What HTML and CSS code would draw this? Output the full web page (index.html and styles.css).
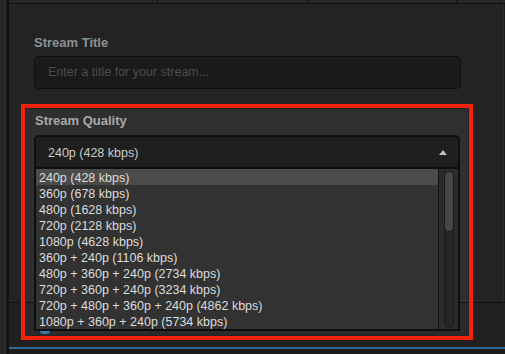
FILE: index.html
```html
<!DOCTYPE html>
<html>
<head>
<meta charset="utf-8">
<link rel="stylesheet" href="styles.css">
</head>
<body>
<div class="app">
  <div class="side"></div>
  <div class="main">
    <div class="topbar"><span></span><span></span><span></span><span></span></div>
    <div class="panel">
      <div class="field-label title-label">Stream Title</div>
      <div class="input">Enter a title for your stream...</div>
      <div class="quality">
        <div class="field-label quality-label">Stream Quality</div>
        <div class="select"><span>240p (428 kbps)</span><span class="caret"></span></div>
        <div class="list">
          <ul class="options">
            <li class="active">240p (428 kbps)</li>
            <li>360p (678 kbps)</li>
            <li>480p (1628 kbps)</li>
            <li>720p (2128 kbps)</li>
            <li>1080p (4628 kbps)</li>
            <li>360p + 240p (1106 kbps)</li>
            <li>480p + 360p + 240p (2734 kbps)</li>
            <li>720p + 360p + 240p (3234 kbps)</li>
            <li>720p + 480p + 360p + 240p (4862 kbps)</li>
            <li>1080p + 360p + 240p (5734 kbps)</li>
          </ul>
          <div class="scroll"><div class="track"><div class="thumb"></div></div></div>
        </div>
        <div class="peek"></div>
      </div>
    </div>
    <div class="lower"></div>
    <div class="blue"></div>
    <div class="bottom"></div>
  </div>
</div>
</body>
</html>
```
FILE: styles.css
```css
* { box-sizing: border-box; }
html, body { margin: 0; padding: 0; }
body {
  width: 505px;
  height: 354px;
  overflow: hidden;
  background: #1d1d1d;
  font-family: "Liberation Sans", Arial, sans-serif;
}
.app { display: flex; height: 354px; }
.side {
  width: 9px;
  flex: none;
  background: linear-gradient(to right, #2a2a2a 0 2px, #1f1f1f 2px 3px, #2c2c2c 3px 6px, #131313 6px 9px);
}
.main { flex: 1; display: flex; flex-direction: column; min-width: 0; }
.topbar {
  height: 4px;
  flex: none;
  display: grid;
  grid-template-columns: 149px 150px 149px 1fr;
  border-bottom: 1px solid #111;
  background: #272727;
}
.topbar span { border-right: 1px solid #111; }
.topbar span:last-child { border-right: 0; }
.panel {
  height: 298px;
  flex: none;
  background: #232323;
  padding: 31px 0 0 25px;
  margin-right: 1px;
  border-right: 1px solid #2d2d2d;
}
.field-label {
  font-weight: bold;
  font-size: 13px;
  line-height: 16px;
  margin-bottom: 6px;
}
.title-label { color: #8b9096; margin-bottom: 5px; }
.input {
  width: 427px;
  height: 33px;
  border: 1px solid #0e0e0e;
  border-radius: 5px;
  background: #1a1a1a;
  color: #4c4c4c;
  font-size: 12.5px;
  line-height: 31px;
  padding-left: 13px;
}
.quality {
  position: relative;
  z-index: 1;
  margin: 15px 0 0 -13px;
  width: 452px;
  border: 4px solid #f2220b;
  box-shadow: inset 0 0 0 1px #242424;
  padding: 5px 9px 2px 9px;
  background: linear-gradient(to bottom, #2f2f2f 0 194px, #121212 194px 195px, #2a2a2a 195px);
}
.quality-label { color: #a9a9a9; margin-left: 1px; }
.select {
  height: 34px;
  border: 2px solid #0e0e0e;
  border-radius: 5px 5px 0 0;
  background: #1f1f1f;
  padding: 1px 11px 0 12px;
  display: flex;
  align-items: center;
  justify-content: space-between;
  color: #cacaca;
  font-size: 12.5px;
}
.caret {
  width: 0;
  height: 0;
  border-left: 4px solid transparent;
  border-right: 4px solid transparent;
  border-bottom: 5px solid #bdbdbd;
}
.list {
  display: flex;
  border: 2px solid #0e0e0e;
  border-top: 0;
  background: #323232;
}
.options {
  flex: 1;
  list-style: none;
  margin: 0;
  padding: 0;
}
.options li {
  height: 16px;
  line-height: 18px;
  padding-left: 3px;
  font-size: 12.5px;
  color: #dcdcdc;
  white-space: nowrap;
}
.options li.active { background: #4b4b4b; }
.scroll {
  width: 20px;
  flex: none;
  background: #2b2b2b;
  border-left: 1px solid #141414;
  padding: 2px 4px 2px 5px;
  display: flex;
}
.track {
  flex: 1;
  border: 1px solid #181818;
  border-radius: 5px;
  background: #262626;
}
.thumb {
  height: 61px;
  margin: -1px;
  border: 1px solid #1c1c1c;
  border-radius: 5px;
  background: #474747;
}
.peek {
  margin-left: 6px;
  width: 10px;
  height: 3px;
  border-radius: 0 0 5px 5px;
  background: #3478a8;
}
.lower {
  height: 45px;
  flex: none;
  border-top: 1px solid #111;
  background: #202020;
}
.blue { height: 2px; flex: none; background: #2b6698; }
.bottom { flex: 1; background: #1d1d1d; }
```
